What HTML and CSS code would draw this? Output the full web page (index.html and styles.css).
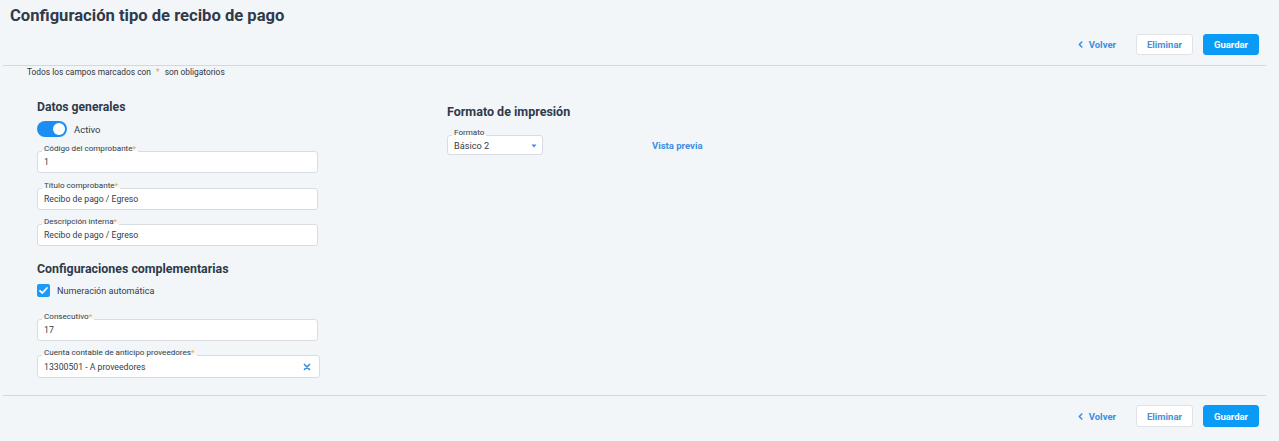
FILE: index.html
```html
<!DOCTYPE html>
<html lang="es">
<head>
<meta charset="utf-8">
<title>Configuración tipo de recibo de pago</title>
<link rel="stylesheet" href="styles.css">
</head>
<body>
<div class="page">
  <header class="page-header">
    <h1 class="page-title">Configuración tipo de recibo de pago</h1>
  </header>
  <div class="actions actions-top">
    <a class="btn-back" href="#"><svg class="chev" width="5" height="7" viewBox="0 0 5 7"><polyline points="3.8,1 1.3,3.5 3.8,6" fill="none" stroke="#3b8fe3" stroke-width="1.6" stroke-linecap="round" stroke-linejoin="round"/></svg>Volver</a>
    <button class="btn btn-outline">Eliminar</button>
    <button class="btn btn-primary">Guardar</button>
  </div>
  <div class="divider"></div>
  <p class="note">Todos los campos marcados con <span class="req">*</span> son obligatorios</p>

  <main class="content">
    <section class="col-left">
      <h2 class="section-title">Datos generales</h2>
      <div class="toggle-row">
        <span class="toggle"><span class="knob"></span></span>
        <span class="toggle-label">Activo</span>
      </div>

      <div class="field f-first">
        <span class="field-label">Código del comprobante<span class="req">*</span></span>
        <div class="field-box">1</div>
      </div>
      <div class="field">
        <span class="field-label">Título comprobante<span class="req">*</span></span>
        <div class="field-box">Recibo de pago / Egreso</div>
      </div>
      <div class="field">
        <span class="field-label">Descripción interna<span class="req">*</span></span>
        <div class="field-box">Recibo de pago / Egreso</div>
      </div>

      <h2 class="section-title st-second">Configuraciones complementarias</h2>
      <div class="check-row">
        <span class="checkbox"><svg width="13" height="13" viewBox="0 0 13 13"><polyline points="3,6.8 5.4,9 10,4" fill="none" stroke="#fff" stroke-width="1.8" stroke-linecap="round" stroke-linejoin="round"/></svg></span>
        <span class="check-label">Numeración automática</span>
      </div>

      <div class="field f-consec">
        <span class="field-label">Consecutivo<span class="req">*</span></span>
        <div class="field-box">17</div>
      </div>
      <div class="field f-wide">
        <span class="field-label">Cuenta contable de anticipo proveedores<span class="req">*</span></span>
        <div class="field-box field-clear">
          <span>13300501 - A proveedores</span>
          <svg class="clear-x" width="8" height="8" viewBox="0 0 8 8"><path d="M1.5 1.5 L6.5 6.5 M6.5 1.5 L1.5 6.5" stroke="#3b8fe3" stroke-width="1.7" stroke-linecap="round"/></svg>
        </div>
      </div>
    </section>

    <section class="col-right">
      <h2 class="section-title st-right">Formato de impresión</h2>
      <div class="format-row">
        <div class="field f-select">
          <span class="field-label">Formato</span>
          <div class="field-box select-box">
            <span>Básico 2</span>
            <svg class="caret" width="6" height="4" viewBox="0 0 6 4"><path d="M0.5 0.5 H5.5 L3 3.5 Z" fill="#3b8fe3"/></svg>
          </div>
        </div>
        <a class="preview" href="#">Vista previa</a>
      </div>
    </section>
  </main>

  <div class="divider divider-bottom"></div>
  <div class="actions actions-bottom">
    <a class="btn-back" href="#"><svg class="chev" width="5" height="7" viewBox="0 0 5 7"><polyline points="3.8,1 1.3,3.5 3.8,6" fill="none" stroke="#3b8fe3" stroke-width="1.6" stroke-linecap="round" stroke-linejoin="round"/></svg>Volver</a>
    <button class="btn btn-outline">Eliminar</button>
    <button class="btn btn-primary">Guardar</button>
  </div>
</div>
</body>
</html>
```

FILE: styles.css
```css
* { box-sizing: border-box; }

html, body {
  margin: 0;
  padding: 0;
  background: #f3f6f8;
}

body {
  font-family: Roboto, "Liberation Sans", sans-serif;
  color: #343c47;
  font-size: 9px;
}

.page {
  width: 1279px;
  height: 441px;
  overflow: hidden;
}

.page-header {
  padding: 6px 0 0 10px;
}

.page-title {
  margin: 0;
  font-size: 16.6px;
  line-height: 20px;
  font-weight: 700;
  color: #2f3a4b;
}

.actions {
  display: flex;
  justify-content: flex-end;
  align-items: center;
  padding-right: 20px;
  height: 21px;
}

.actions-top { margin-top: 8px; }
.actions-bottom { margin-top: 9px; height: 22px; }

.btn-back {
  display: flex;
  align-items: center;
  gap: 6px;
  color: #3b8fe3;
  text-decoration: none;
  font-weight: 700;
  font-size: 9.5px;
  margin-right: 20px;
}

.btn {
  font-family: Roboto, "Liberation Sans", sans-serif;
  font-size: 9.5px;
  font-weight: 700;
  height: 100%;
  border-radius: 3px;
  padding: 0;
  cursor: pointer;
}

.btn-outline {
  width: 57px;
  background: #fff;
  border: 1px solid #dfe3e8;
  color: #4a8fd8;
  margin-right: 10px;
}

.btn-primary {
  width: 56px;
  background: #0a9bf6;
  border: 1px solid #0a9bf6;
  color: #fff;
}

.divider {
  height: 1px;
  background: #d3d8dc;
  margin: 10px 13px 0 3px;
}

.divider-bottom { margin-top: 17px; }

.note {
  margin: 0;
  padding-left: 27px;
  line-height: 12px;
  font-size: 8.4px;
  color: #2e353f;
}

.req { color: #f5a623; }
.note .req { margin: 0 3px; }

.content {
  display: flex;
  padding: 22px 0 0 37px;
}

.col-left {
  width: 283px;
  display: flex;
  flex-direction: column;
}

.col-right {
  margin-left: 127px;
  padding-top: 5px;
}

.section-title {
  margin: 0;
  font-size: 12.2px;
  line-height: 14px;
  font-weight: 700;
  color: #2f3a4b;
}

.st-second { margin-top: 16px; font-size: 12.4px; }
.st-right { font-size: 12.5px; }

.toggle-row {
  display: flex;
  align-items: center;
  gap: 7px;
  margin-top: 7px;
  height: 16px;
}

.toggle {
  width: 30px;
  height: 16px;
  border-radius: 8px;
  background: #1a8ff1;
  display: flex;
  justify-content: flex-end;
  align-items: center;
  padding-right: 2px;
}

.knob {
  width: 12px;
  height: 12px;
  border-radius: 50%;
  background: #fff;
}

.toggle-label {
  font-size: 9.5px;
  color: #343c47;
}

.check-label {
  font-size: 9.1px;
  color: #343c47;
}

.field {
  position: relative;
  margin-top: 14.5px;
  width: 281px;
}

.f-first { margin-top: 14px; }
.f-consec { margin-top: 22px; }
.f-wide { width: 283px; margin-top: 14px; }
.f-wide .field-box { height: 23px; }

.field-label {
  position: absolute;
  left: 5px;
  top: -8px;
  padding: 0 2px;
  font-size: 8.1px;
  line-height: 10px;
  color: #363d48;
  white-space: nowrap;
  background: linear-gradient(to bottom, rgba(255,255,255,0) 8px, #fff 8px);
}

.field-box {
  height: 22px;
  background: #fff;
  border: 1px solid #d9dde1;
  border-radius: 3px;
  padding: 0 6px;
  display: flex;
  align-items: center;
  font-size: 8.7px;
  color: #343c47;
}

.field-clear {
  justify-content: space-between;
  padding-right: 8px;
}

.check-row {
  display: flex;
  align-items: center;
  gap: 7px;
  margin-top: 8px;
  height: 13px;
}

.checkbox {
  width: 13px;
  height: 13px;
  border-radius: 2px;
  background: #1a9bf6;
  display: flex;
}

.format-row {
  display: flex;
  align-items: center;
  margin-top: 16px;
}

.f-select {
  width: 96px;
  margin-top: 0;
}

.select-box {
  height: 20px;
  justify-content: space-between;
  padding-right: 5px;
  font-size: 9.2px;
}

.caret { margin-top: 2px; }

.preview {
  margin-left: 109px;
  color: #3b8fe3;
  font-weight: 700;
  font-size: 9.5px;
  text-decoration: none;
}
```
